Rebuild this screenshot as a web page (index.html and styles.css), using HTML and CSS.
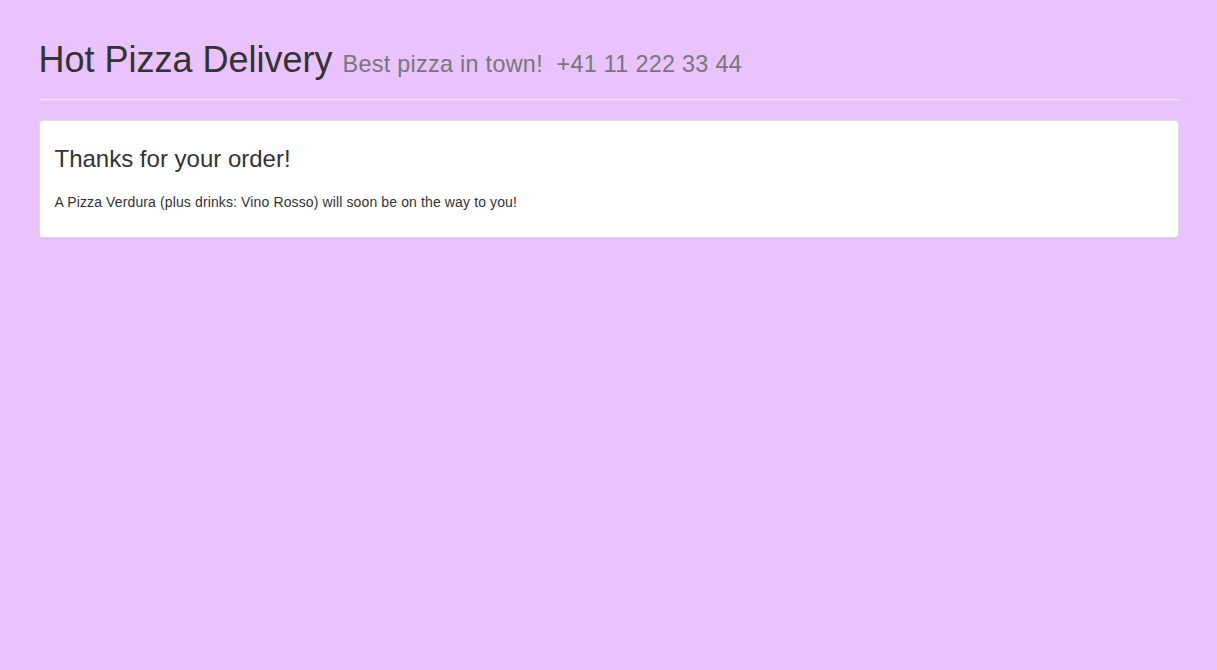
FILE: index.html
```html
<!DOCTYPE html>
<html>
<head>
<meta charset="utf-8">
<title>Hot Pizza Delivery</title>
<link rel="stylesheet" href="styles.css">
</head>
<body>
<div class="container">
  <div class="page-header">
    <h1>Hot Pizza Delivery <small>Best pizza in town!&nbsp; +41 11 222 33 44</small></h1>
  </div>
  <div class="panel">
    <div class="panel-body">
      <h3>Thanks for your order!</h3>
      <p>A Pizza Verdura (plus drinks: Vino Rosso) will soon be on the way to you!</p>
    </div>
  </div>
</div>
</body>
</html>
```
FILE: styles.css
```css
* { box-sizing: border-box; }
html, body { margin: 0; padding: 0; }
body {
  background: #e9c2fe;
  font-family: "Liberation Sans", Arial, Helvetica, sans-serif;
  font-size: 14px;
  line-height: 1.42857143;
  color: #333;
}
.container {
  width: 1170px;
  margin: 0 auto;
  padding: 0 15px;
}
.page-header {
  margin: 40px 0 20px;
  padding-bottom: 9px;
  border-bottom: 1px solid #eee;
}
h1 {
  margin: 20px 0 10px;
  font-size: 36px;
  font-weight: 500;
  line-height: 1.1;
}
h1 small {
  font-size: 65%;
  font-weight: 400;
  line-height: 1;
  color: #777;
  letter-spacing: 0.28px;
}
.panel {
  margin-bottom: 20px;
  background: #fff;
  border: 1px solid #ddd;
  border-radius: 4px;
  box-shadow: 0 1px 1px rgba(0,0,0,.05);
}
.panel-body { padding: 15px; }
h3 {
  margin: 10px 0 20px;
  font-size: 24px;
  font-weight: 500;
  line-height: 1.1;
}
p {
  margin: 0 0 10px;
  letter-spacing: 0.125px;
}
```
